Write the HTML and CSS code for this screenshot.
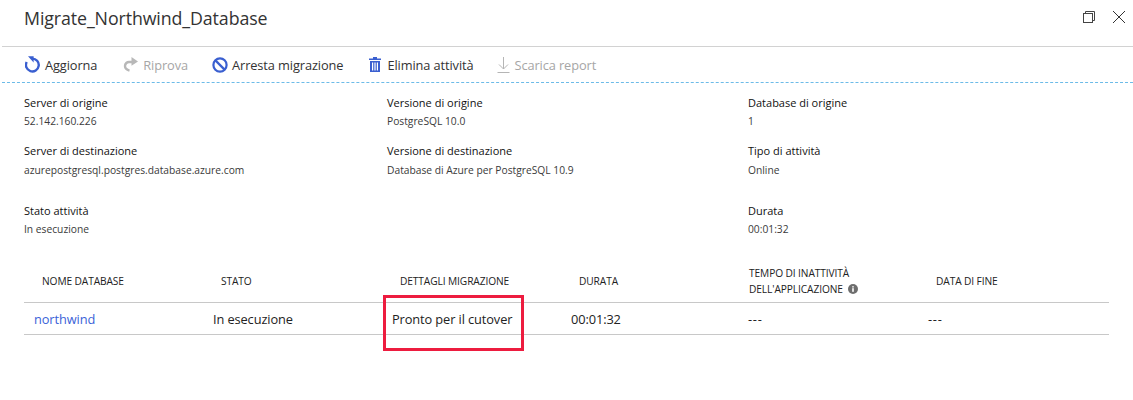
FILE: index.html
```html
<!DOCTYPE html>
<html lang="it">
<head>
<meta charset="utf-8">
<title>Migrate_Northwind_Database</title>
<link rel="stylesheet" href="styles.css">
</head>
<body>
<div class="blade">
  <header class="titlebar">
    <h1 class="title">Migrate_Northwind_Database</h1>
    <div class="winbtns">
      <svg class="winicon" width="12" height="12" viewBox="0 0 12 12" fill="none" stroke="#444" stroke-width="1"><rect x="0.5" y="2.5" width="9" height="9"/><path d="M2.5 2.5V0.5H11.5V9.5H9.5"/></svg>
      <svg class="winicon" width="12" height="12" viewBox="0 0 12 12" fill="none" stroke="#333" stroke-width="1"><path d="M0 0L12 12M12 0L0 12"/></svg>
    </div>
  </header>
  <nav class="toolbar">
    <div class="tool tool-a">
      <svg width="16" height="17" viewBox="0 0 16 17" fill="none"><path d="M7.2 2.6A6.4 6.4 0 1 1 1.7 6" stroke="#3a5fd0" stroke-width="2.4"/><path d="M3 0.2L8.6 0.2L8.6 6.6Z" fill="#3a5fd0"/></svg>
      <span>Aggiorna</span>
    </div>
    <div class="tool tool-b off">
      <svg width="16" height="15" viewBox="0 0 16 15" fill="none"><path d="M10 5H6.5A4 4 0 0 0 2 9C2 11 3.6 12.8 6.5 13.6" stroke="#b8b8b8" stroke-width="2.4"/><path d="M8.5 0L15 4.6L8.5 8.8Z" fill="#b8b8b8"/></svg>
      <span>Riprova</span>
    </div>
    <div class="tool tool-c">
      <svg width="16" height="16" viewBox="0 0 16 16" fill="none" stroke="#3a5fd0" stroke-width="2.2"><circle cx="8" cy="8" r="6.6"/><path d="M3.4 3.4L12.6 12.6"/></svg>
      <span>Arresta migrazione</span>
    </div>
    <div class="tool tool-d">
      <svg width="12" height="15" viewBox="0 0 12 15" fill="#3a5fd0"><path d="M4 0H8V1.5H12V3H0V1.5H4Z"/><path d="M1 4H11V15H1ZM3 5.5V13.5H4.2V5.5ZM5.4 5.5V13.5H6.6V5.5ZM7.8 5.5V13.5H9V5.5Z" fill-rule="evenodd"/></svg>
      <span>Elimina attività</span>
    </div>
    <div class="tool tool-e off">
      <svg width="13" height="16" viewBox="0 0 13 16" fill="none" stroke="#b5b5b5" stroke-width="1"><path d="M6.5 0V12M2 7.5L6.5 12L11 7.5M0.5 15.5H12.5"/></svg>
      <span>Scarica report</span>
    </div>
  </nav>
  <section class="info">
    <div class="field f1"><div class="label">Server di origine</div><div class="value">52.142.160.226</div></div>
    <div class="field f1"><div class="label">Versione di origine</div><div class="value">PostgreSQL 10.0</div></div>
    <div class="field f1"><div class="label">Database di origine</div><div class="value">1</div></div>
    <div class="field f2"><div class="label">Server di destinazione</div><div class="value">azurepostgresql.postgres.database.azure.com</div></div>
    <div class="field f2"><div class="label">Versione di destinazione</div><div class="value">Database di Azure per PostgreSQL 10.9</div></div>
    <div class="field f2"><div class="label">Tipo di attività</div><div class="value">Online</div></div>
    <div class="field f3"><div class="label">Stato attività</div><div class="value">In esecuzione</div></div>
    <div class="field f3"></div>
    <div class="field f3"><div class="label">Durata</div><div class="value">00:01:32</div></div>
  </section>
  <section class="table">
    <div class="row head">
      <div class="th">NOME DATABASE</div>
      <div class="th">STATO</div>
      <div class="th">DETTAGLI MIGRAZIONE</div>
      <div class="th">DURATA</div>
      <div class="th th-near">TEMPO DI INATTIVITÀ<br>DELL'APPLICAZIONE <svg class="info-icon" width="10" height="10" viewBox="0 0 10 10"><circle cx="5" cy="5" r="5" fill="#6e6e6e"/><rect x="4.2" y="4.2" width="1.6" height="3.6" fill="#fff"/><rect x="4.2" y="2.2" width="1.6" height="1.3" fill="#fff"/></svg></div>
      <div class="th">DATA DI FINE</div>
    </div>
    <div class="row body">
      <div class="td link">northwind</div>
      <div class="td">In esecuzione</div>
      <div class="td">Pronto per il cutover<span class="highlight"></span></div>
      <div class="td">00:01:32</div>
      <div class="td dash">---</div>
      <div class="td dash">---</div>
    </div>
  </section>
</div>
</body>
</html>
```
FILE: styles.css
```css
* { box-sizing: border-box; }
html, body { margin: 0; padding: 0; background: #fff; }
body { font-family: "Open Sans", "Noto Sans", sans-serif; color: #1f1f1f; width: 1133px; height: 400px; overflow: hidden; }
.blade { display: flex; flex-direction: column; }
.titlebar { height: 47px; margin-left: 2px; padding: 0 8px 0 22px; border-bottom: 1px solid #d2d2d2; display: flex; justify-content: space-between; align-items: flex-start; }
.title { margin: 6px 0 0; font-size: 17.8px; line-height: 24px; font-weight: 400; color: #333; letter-spacing: -0.1px; }
.winbtns { display: flex; gap: 18px; margin-top: 11px; align-items: center; }
.winicon { display: block; }
.toolbar { height: 36px; margin-left: 2px; padding-left: 23px; border-bottom: 1px dashed #6cbbe8; display: flex; align-items: center; }
.tool { display: flex; align-items: center; gap: 4px; font-size: 12.8px; color: #333; letter-spacing: -0.1px; }
.tool-a { margin-right: 26px; }
.tool-b { margin-right: 24px; }
.tool-c { margin-right: 26px; }
.tool-d { gap: 6px; margin-right: 24px; }
.tool-e { color: #a6a6a6; }
.off { color: #a6a6a6; }
.info { display: grid; grid-template-columns: 363px 361px 1fr; padding: 12px 0 0 24px; }
.field { display: flex; flex-direction: column; }
.f1 { height: 48px; }
.f2 { height: 60px; }
.f3 { height: 60px; }
.label { font-size: 11px; line-height: 16px; color: #111; }
.value { font-size: 10.25px; line-height: 16px; margin-top: 2px; color: #3a3a3a; }
.f2 .value { margin-top: 3px; }
.table { margin: -4px 24px 0; }
.row { display: grid; grid-template-columns: 179px 179px 179px 177px 180px 1fr; border-bottom: 1px solid #c8c8c8; }
.head { height: 44px; align-items: center; }
.body { height: 32px; align-items: center; }
.th { padding-left: 18px; font-size: 10.2px; line-height: 16px; color: #222; letter-spacing: -0.1px; }
.th-near { padding-left: 11px; }
.info-icon { vertical-align: -1px; margin-left: 3px; }
.td { position: relative; font-size: 12.8px; color: #222; letter-spacing: -0.1px; padding-left: 10px; }
.dash { letter-spacing: 0.7px; }
.link { color: #3a62d8; }
.highlight { position: absolute; left: 1px; top: -15px; width: 141px; height: 56px; border: 3px solid #ed1c3f; }
```
